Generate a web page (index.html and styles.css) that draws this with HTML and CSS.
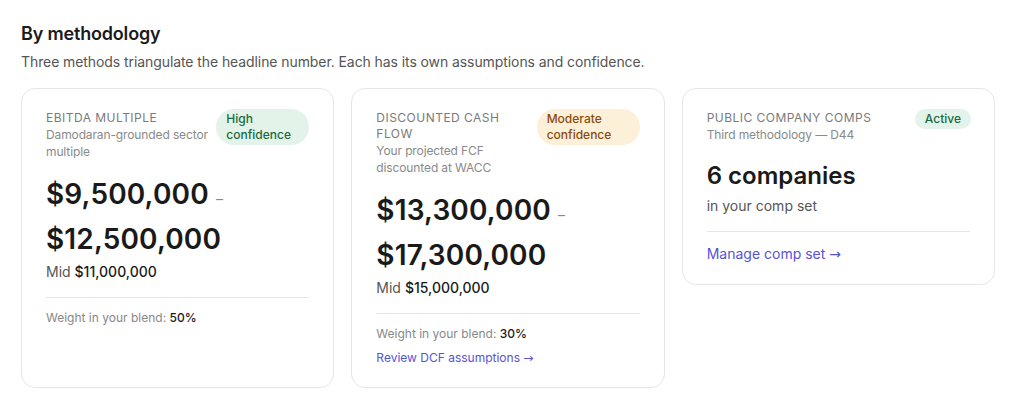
FILE: index.html
```html
<!DOCTYPE html>
<html>
<head>
<meta charset="utf-8">
<link rel="stylesheet" href="styles.css">
</head>
<body>
<section class="section">
  <h2 class="title">By methodology</h2>
  <p class="lead">Three methods triangulate the headline number. Each has its own assumptions and confidence.</p>
  <div class="cards">
    <div class="card">
      <div class="head">
        <div class="head-text">
          <div class="label">EBITDA MULTIPLE</div>
          <div class="sub">Damodaran-grounded sector multiple</div>
        </div>
        <span class="badge badge-green">High confidence</span>
      </div>
      <div class="range">$9,500,000 <span class="dash">–</span> $12,500,000</div>
      <div class="mid">Mid <b>$11,000,000</b></div>
      <div class="divider"></div>
      <div class="weight">Weight in your blend: <b>50%</b></div>
    </div>
    <div class="card">
      <div class="head">
        <div class="head-text">
          <div class="label">DISCOUNTED CASH FLOW</div>
          <div class="sub">Your projected FCF discounted at WACC</div>
        </div>
        <span class="badge badge-amber">Moderate confidence</span>
      </div>
      <div class="range">$13,300,000 <span class="dash">–</span> $17,300,000</div>
      <div class="mid">Mid <b>$15,000,000</b></div>
      <div class="divider"></div>
      <div class="weight">Weight in your blend: <b>30%</b></div>
      <a class="link link-sm" href="#">Review DCF assumptions <span class="arrow">→</span></a>
    </div>
    <div class="card card-short">
      <div class="head">
        <div class="head-text">
          <div class="label">PUBLIC COMPANY COMPS</div>
          <div class="sub">Third methodology — D44</div>
        </div>
        <span class="badge badge-green badge-one">Active</span>
      </div>
      <div class="count">6 companies</div>
      <div class="count-sub">in your comp set</div>
      <div class="divider divider-c"></div>
      <a class="link link-md" href="#">Manage comp set <span class="arrow">→</span></a>
    </div>
  </div>
</section>
</body>
</html>
```
FILE: styles.css
```css
* { box-sizing: border-box; }
html, body { margin: 0; padding: 0; background: #fff; }
body {
  font-family: Inter, "Noto Sans", sans-serif;
  color: #1a1a1a;
}
.section {
  width: 974px;
  margin: 0 0 0 21px;
  padding-top: 22px;
}
.title {
  margin: 0;
  font-size: 18px;
  line-height: 24px;
  font-weight: 600;
  color: #1a1a1a;
  letter-spacing: -0.01em;
}
.lead {
  margin: 6px 0 0;
  font-size: 14px;
  line-height: 20px;
  color: #555;
  letter-spacing: -0.006em;
}
.cards {
  margin-top: 16px;
  display: grid;
  grid-template-columns: repeat(3, 1fr);
  gap: 17px;
  align-items: stretch;
}
.card {
  border: 1px solid #e6e6e6;
  border-radius: 14px;
  padding: 20px 24px 21px;
  background: #fff;
}
.card-short { align-self: start; padding-bottom: 20px; }
.head {
  display: flex;
  justify-content: space-between;
  align-items: flex-start;
  gap: 6px;
}
.head-text { flex: 1; min-width: 0; }
.label {
  font-size: 12px;
  line-height: 16px;
  letter-spacing: 0.04em;
  color: #7a7a7a;
  font-weight: 400;
  padding-top: 1px;
}
.sub {
  font-size: 12px;
  line-height: 17px;
  color: #8a8a8a;
  letter-spacing: -0.01em;
}
.badge {
  flex: none;
  font-size: 12px;
  line-height: 16px;
  padding: 2px 10px;
  border-radius: 18px;
  font-weight: 500;
  width: 93px;
  margin-top: 0;
}
.badge-amber { width: 103px; }
.badge-one { width: auto; padding: 2px 10px; margin-right: -1px; }
.badge-green { background: #e3f3e9; color: #1b6a3d; }
.badge-amber { background: #fdf0d9; color: #8b4a0c; }
.range {
  margin-top: 12px;
  font-size: 28px;
  line-height: 45px;
  font-weight: 600;
  color: #1a1a1a;
  letter-spacing: 0.005em;
}
.dash {
  font-size: 14px;
  line-height: 1;
  font-weight: 400;
  color: #888;
}
.mid {
  font-size: 14px;
  line-height: 20px;
  color: #555;
  margin-top: 0;
}
.mid b { color: #1a1a1a; font-weight: 500; }
.divider {
  height: 1px;
  background: #e6e6e6;
  margin: 15px 0 12px;
}
.weight {
  font-size: 12px;
  line-height: 16px;
  color: #888;
}
.weight b { color: #1a1a1a; font-weight: 500; }
.link {
  display: block;
  color: #5753d6;
  text-decoration: none;
}
.arrow { font-family: "DejaVu Sans", sans-serif; font-weight: 400; line-height: 1; }
.link-sm { font-size: 12px; line-height: 16px; margin-top: 8px; }
.link-md { font-size: 14px; line-height: 20px; }
.count {
  margin-top: 18px;
  font-size: 24px;
  line-height: 30px;
  font-weight: 600;
  color: #1a1a1a;
}
.count-sub {
  margin-top: 5px;
  font-size: 14px;
  line-height: 20px;
  color: #555;
}
.divider.divider-c { margin: 15px 0 12px; }
```
